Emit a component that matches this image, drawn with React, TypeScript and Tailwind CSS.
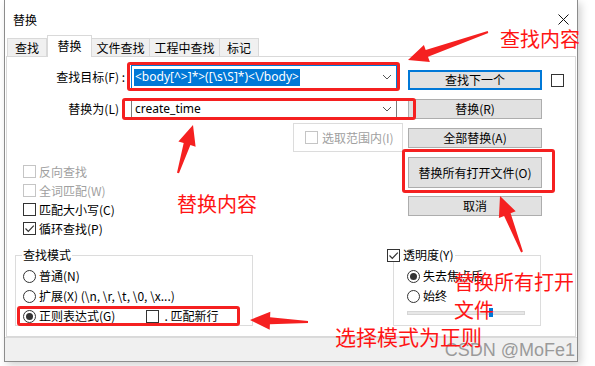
import React from 'react';

const UI = "font-['Noto_Sans_CJK_SC',sans-serif]";

function arrow(tx: number, ty: number, px: number, py: number, headLen = 20, headHalf = 9, tailHalf = 1, neckHalf = 3.5) {
  const dx = px - tx;
  const dy = py - ty;
  const l = Math.hypot(dx, dy);
  const ux = dx / l;
  const uy = dy / l;
  const nx = -uy;
  const ny = ux;
  const bx = px - ux * headLen;
  const by = py - uy * headLen;
  const pts = [
    [tx + nx * tailHalf, ty + ny * tailHalf],
    [bx + nx * neckHalf, by + ny * neckHalf],
    [bx + nx * headHalf, by + ny * headHalf],
    [px, py],
    [bx - nx * headHalf, by - ny * headHalf],
    [bx - nx * neckHalf, by - ny * neckHalf],
    [tx - nx * tailHalf, ty - ny * tailHalf],
  ];
  return pts.map((p) => p.map((v) => v.toFixed(1)).join(',')).join(' ');
}

function Check({ checked = false, disabled = false }: { checked?: boolean; disabled?: boolean }) {
  return (
    <span
      className={`flex h-[13px] w-[13px] shrink-0 items-center justify-center border bg-white ${
        disabled ? 'border-[#c5c5c5]' : 'border-[#333333]'
      }`}
    >
      {checked && (
        <svg width="11" height="11" viewBox="0 0 11 11">
          <path d="M1.5 5.5 L4.3 8.3 L9.8 2.6" fill="none" stroke="#333" strokeWidth="1.2" />
        </svg>
      )}
    </span>
  );
}

function Radio({ on = false }: { on?: boolean }) {
  return (
    <span className="flex h-[13px] w-[13px] shrink-0 items-center justify-center rounded-full border border-[#333333] bg-white">
      {on && <span className="h-[7px] w-[7px] rounded-full bg-[#333333]" />}
    </span>
  );
}

function Btn({ children, primary = false, tall = false }: { children: React.ReactNode; primary?: boolean; tall?: boolean }) {
  return (
    <div
      className={`flex w-[134px] items-center justify-center bg-[#e1e1e1] text-[12px] text-black ${
        tall ? 'h-[31px]' : 'h-[20px]'
      } ${primary ? 'border-2 border-[#0078d7]' : 'border border-[#adadad]'}`}
    >
      {children}
    </div>
  );
}

function Chevron() {
  return (
    <svg width="10" height="6" viewBox="0 0 10 6" className="mr-[4px]">
      <path d="M1 1 L5 5 L9 1" fill="none" stroke="#555" strokeWidth="1" />
    </svg>
  );
}

export default function App() {
  const tabs = [
    { name: '查找', w: 'w-[40px]' },
    { name: '替换', w: 'w-[45px]', active: true },
    { name: '文件查找', w: 'w-[59px]' },
    { name: '工程中查找', w: 'w-[71px]' },
    { name: '标记', w: 'w-[40px]' },
  ];

  return (
    <div className={`relative h-[366px] w-[595px] overflow-hidden bg-white ${UI} text-[12px] text-black`}>
      {/* window */}
      <div className="ml-[4px] flex h-[362px] w-[574px] flex-col border-x border-b border-[#8c8c8c] bg-white shadow-[3px_3px_8px_rgba(0,0,0,0.18)]">
        {/* title bar */}
        <div className="flex h-[36px] items-center justify-between pl-[8px] pr-[8px] pt-[4px]">
          <span className="text-[12px]">替换</span>
          <svg width="11" height="11" viewBox="0 0 11 11" className="mb-[1px]">
            <path d="M0.5 0.5 L10.5 10.5 M10.5 0.5 L0.5 10.5" stroke="#111" strokeWidth="1" />
          </svg>
        </div>

        {/* tabs */}
        <div className="flex h-[20px] items-end pl-[2px]">
          {tabs.map((t) =>
            t.active ? (
              <div
                key={t.name}
                className={`relative z-10 -mb-px flex h-[22px] ${t.w} items-center justify-center border-x border-t border-[#d9d9d9] bg-white pb-[2px]`}
              >
                {t.name}
              </div>
            ) : (
              <div
                key={t.name}
                className={`flex h-[18px] ${t.w} -ml-px items-center justify-center border border-b-0 border-[#d9d9d9] bg-[#f0f0f0] pt-[1px] first:ml-0`}
              >
                {t.name}
              </div>
            )
          )}
        </div>

        {/* panel */}
        <div className="mx-[1px] h-[281px] border border-[#d9d9d9] bg-white">
          <div className="flex">
            {/* left column */}
            <div className="flex w-[396px] flex-col">
              <div className="mt-[8px] flex h-[24px] items-center">
                <span className="w-[120px] pr-[2px] text-right">查找目标(F) :</span>
                <div className="ml-[4px] flex h-[24px] w-[266px] items-center justify-between border border-[#0078d7] bg-white">
                  <span className="ml-[2px] flex h-[17px] items-center bg-[#0078d7] px-[1px] font-['Noto_Sans',sans-serif] text-[12px] text-white">
                    {'<body[^>]*>([\\s\\S]*)<\\/body>'}
                  </span>
                  <Chevron />
                </div>
              </div>
              <div className="mt-[10px] flex h-[20px] items-center">
                <span className="w-[120px] pr-[2px] text-right">替换为(L) :</span>
                <div className="ml-[4px] flex h-[20px] w-[266px] items-center justify-between border border-[#7a7a7a] bg-white">
                  <span className="ml-[3px] font-['Noto_Sans',sans-serif] text-[12px]">create_time</span>
                  <Chevron />
                </div>
              </div>
              <div className="ml-[286px] mt-[4px] flex h-[29px] w-[110px] items-center gap-[4px] border border-[#dcdcdc] pl-[11px] text-[#a0a0a0]">
                <Check disabled />
                <span>选取范围内(I)</span>
              </div>
              <div className="mt-[10px] flex flex-col pl-[16px]">
                <div className="flex h-[19px] items-center gap-[3px] text-[#a0a0a0]">
                  <Check disabled />
                  <span>反向查找</span>
                </div>
                <div className="flex h-[19px] items-center gap-[3px] text-[#a0a0a0]">
                  <Check disabled />
                  <span>全词匹配(W)</span>
                </div>
                <div className="flex h-[19px] items-center gap-[3px]">
                  <Check />
                  <span>匹配大小写(C)</span>
                </div>
                <div className="flex h-[19px] items-center gap-[3px]">
                  <Check checked />
                  <span>循环查找(P)</span>
                </div>
              </div>
            </div>

            {/* right column */}
            <div className="ml-[5px] flex flex-col">
              <div className="mt-[13px] flex items-center">
                <Btn primary>查找下一个</Btn>
                <span className="ml-[9px]">
                  <Check />
                </span>
              </div>
              <div className="mt-[9px]">
                <Btn>替换(R)</Btn>
              </div>
              <div className="mt-[9px]">
                <Btn>全部替换(A)</Btn>
              </div>
              <div className="mt-[9px]">
                <Btn tall>替换所有打开文件(O)</Btn>
              </div>
              <div className="mt-[8px]">
                <Btn>取消</Btn>
              </div>
            </div>
          </div>

          {/* group boxes */}
          <div className="mt-[17px] flex items-start">
            <div className="relative ml-[8px] h-[71px] w-[238px] border border-[#dcdcdc] pl-[7px] pt-[10px]">
              <span className="absolute -top-[8px] left-[6px] bg-white px-[1px] leading-[14px]">查找模式</span>
              <div className="flex h-[20px] items-center gap-[3px]">
                <Radio />
                <span>普通(N)</span>
              </div>
              <div className="flex h-[20px] items-center gap-[3px]">
                <Radio />
                <span>扩展(X) {'(\\n, \\r, \\t, \\0, \\x...)'}</span>
              </div>
              <div className="flex h-[20px] items-center gap-[3px]">
                <Radio on />
                <span>正则表达式(G)</span>
                <span className="ml-[28px]">
                  <Check />
                </span>
                <span className="ml-[2px]">. 匹配新行</span>
              </div>
            </div>

            <div className="relative ml-[140px] h-[71px] w-[148px] border border-[#dcdcdc] pl-[13px] pt-[10px]">
              <span className="absolute -left-[7px] -top-[8px] flex items-center gap-[3px] bg-white pr-[2px] leading-[14px]">
                <Check checked />
                <span>透明度(Y)</span>
              </span>
              <div className="flex h-[20px] items-center gap-[3px]">
                <Radio on />
                <span>失去焦点后</span>
              </div>
              <div className="flex h-[20px] items-center gap-[3px]">
                <Radio />
                <span>始终</span>
              </div>
              <div className="relative mt-[5px] h-[4px] w-[118px] border border-[#d6d6d6] bg-[#e7e7e7]">
                <span className="absolute -top-[4px] left-[81px] h-[9px] w-[4px] bg-[#0078d7]" />
              </div>
            </div>
          </div>
        </div>

        {/* bottom band */}
        <div className="flex h-[24px] items-center justify-end border-t border-[#dadada] bg-[#f0f0f0] pr-[2px]">
          <span className="font-['Liberation_Sans',sans-serif] text-[18px] leading-none text-[#9a9a9a]">CSDN @MoFe1</span>
        </div>
      </div>

      {/* annotations */}
      <div className="pointer-events-none absolute left-[127px] top-[62px] h-[29px] w-[273px] rounded-[3px] border-[3px] border-[#f52020]" />
      <div className="pointer-events-none absolute left-[122px] top-[98px] h-[22px] w-[294px] rounded-[3px] border-[3px] border-[#f52020]" />
      <div className="pointer-events-none absolute left-[402px] top-[149px] h-[44px] w-[153px] rounded-[3px] border-[3px] border-[#f52020]" />
      <div className="pointer-events-none absolute left-[17px] top-[306px] h-[20px] w-[223px] rounded-[3px] border-[3px] border-[#f52020]" />

      <svg className="pointer-events-none absolute left-0 top-0" width="595" height="366">
        <polygon points={arrow(488, 32, 408, 60)} fill="#f52020" />
        <polygon points={arrow(178, 173, 193, 125)} fill="#f52020" />
        <polygon points={arrow(522, 252, 500, 196)} fill="#f52020" />
        <polygon points={arrow(308, 322, 250, 320)} fill="#f52020" />
      </svg>

      <span className="absolute left-[500px] top-[28px] text-[20px] leading-[22px] text-[#ff1414]">查找内容</span>
      <span className="absolute left-[177px] top-[193px] text-[20px] leading-[22px] text-[#ff1414]">替换内容</span>
      <span className="absolute left-[454px] top-[268px] text-[20px] leading-[28px] text-[#ff1414]">
        替换所有打开
        <br />
        文件
      </span>
      <span className="absolute left-[335px] top-[325px] text-[21px] leading-[22px] text-[#ff1414]">选择模式为正则</span>
    </div>
  );
}
